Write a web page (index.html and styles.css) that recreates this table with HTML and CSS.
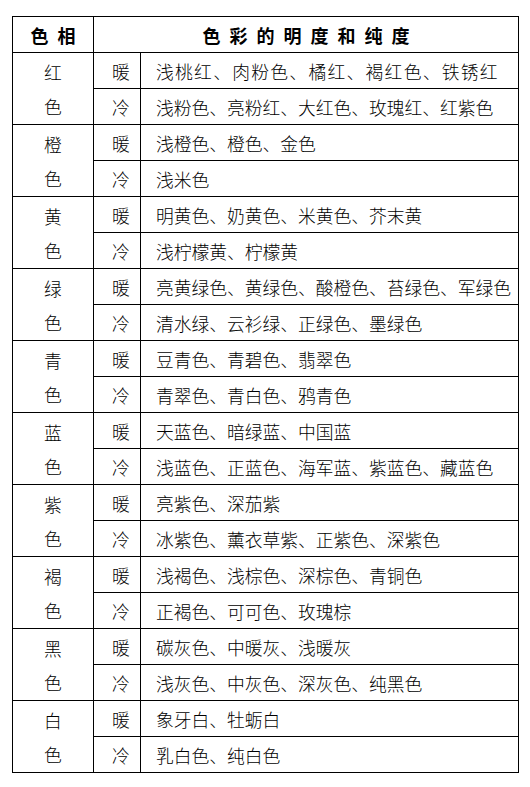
FILE: index.html
```html
<!DOCTYPE html>
<html lang="zh-CN">
<head>
<meta charset="utf-8">
<title>色相与明度纯度</title>
<link rel="stylesheet" href="styles.css">
</head>
<body>
<table class="hue-table">
  <colgroup>
    <col class="col-hue">
    <col class="col-temp">
    <col class="col-list">
  </colgroup>
  <thead>
    <tr>
      <th class="head-hue">色相</th>
      <th class="head-list" colspan="2">色彩的明度和纯度</th>
    </tr>
  </thead>
  <tbody>
    <tr><td class="hue" rowspan="2">红<br>色</td><td class="temp">暖</td><td class="list list-wide">浅桃红、肉粉色、橘红、褐红色、铁锈红</td></tr>
    <tr><td class="temp">冷</td><td class="list">浅粉色、亮粉红、大红色、玫瑰红、红紫色</td></tr>
    <tr><td class="hue" rowspan="2">橙<br>色</td><td class="temp">暖</td><td class="list">浅橙色、橙色、金色</td></tr>
    <tr><td class="temp">冷</td><td class="list">浅米色</td></tr>
    <tr><td class="hue" rowspan="2">黄<br>色</td><td class="temp">暖</td><td class="list">明黄色、奶黄色、米黄色、芥末黄</td></tr>
    <tr><td class="temp">冷</td><td class="list">浅柠檬黄、柠檬黄</td></tr>
    <tr><td class="hue" rowspan="2">绿<br>色</td><td class="temp">暖</td><td class="list">亮黄绿色、黄绿色、酸橙色、苔绿色、军绿色</td></tr>
    <tr><td class="temp">冷</td><td class="list">清水绿、云衫绿、正绿色、墨绿色</td></tr>
    <tr><td class="hue" rowspan="2">青<br>色</td><td class="temp">暖</td><td class="list">豆青色、青碧色、翡翠色</td></tr>
    <tr><td class="temp">冷</td><td class="list">青翠色、青白色、鸦青色</td></tr>
    <tr><td class="hue" rowspan="2">蓝<br>色</td><td class="temp">暖</td><td class="list">天蓝色、暗绿蓝、中国蓝</td></tr>
    <tr><td class="temp">冷</td><td class="list">浅蓝色、正蓝色、海军蓝、紫蓝色、藏蓝色</td></tr>
    <tr><td class="hue" rowspan="2">紫<br>色</td><td class="temp">暖</td><td class="list">亮紫色、深茄紫</td></tr>
    <tr><td class="temp">冷</td><td class="list">冰紫色、薰衣草紫、正紫色、深紫色</td></tr>
    <tr><td class="hue" rowspan="2">褐<br>色</td><td class="temp">暖</td><td class="list">浅褐色、浅棕色、深棕色、青铜色</td></tr>
    <tr><td class="temp">冷</td><td class="list">正褐色、可可色、玫瑰棕</td></tr>
    <tr><td class="hue" rowspan="2">黑<br>色</td><td class="temp">暖</td><td class="list">碳灰色、中暖灰、浅暖灰</td></tr>
    <tr><td class="temp">冷</td><td class="list">浅灰色、中灰色、深灰色、纯黑色</td></tr>
    <tr><td class="hue" rowspan="2">白<br>色</td><td class="temp">暖</td><td class="list">象牙白、牡蛎白</td></tr>
    <tr><td class="temp">冷</td><td class="list">乳白色、纯白色</td></tr>
  </tbody>
</table>
</body>
</html>
```

FILE: styles.css
```css
html, body {
  margin: 0;
  padding: 0;
  background: #ffffff;
}

body {
  font-family: "Noto Sans CJK SC", "Noto Sans", sans-serif;
  color: #000000;
}

.hue-table {
  margin: 16px 0 0 12px;
  width: 506px;
  border-collapse: collapse;
  table-layout: fixed;
  font-size: 17.75px;
  font-weight: 300;
}

.col-hue { width: 81px; }
.col-temp { width: 47px; }
.col-list { width: 378px; }

.hue-table tr {
  height: 36px;
}

.hue-table th,
.hue-table td {
  border: 1px solid #000000;
  padding: 0;
  height: auto;
  line-height: 20px;
  white-space: nowrap;
  vertical-align: middle;
}

.hue-table th {
  font-size: 18px;
  font-weight: 700;
  text-align: center;
  letter-spacing: 9px;
  padding-left: 9px;
}

.hue-table .hue {
  text-align: center;
  line-height: 34px;
}

.hue-table .temp {
  text-align: left;
  padding-left: 18px;
}

.hue-table .list {
  text-align: left;
  padding-left: 15px;
}

.hue-table .list-wide {
  letter-spacing: 1.3px;
}
```
